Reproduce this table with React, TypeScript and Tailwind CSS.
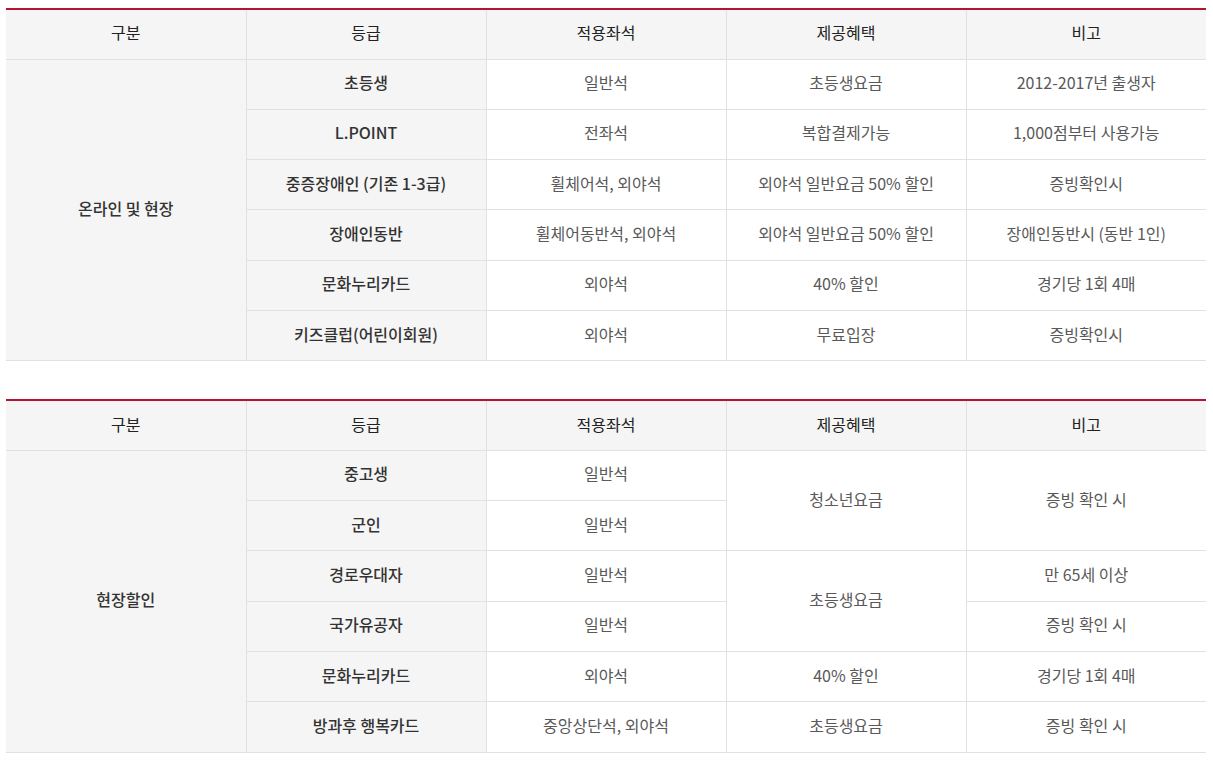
import React from "react";

const HEAD = ["구분", "등급", "적용좌석", "제공혜택", "비고"];

type Cell = { text: string; rows?: number };
type Row = { grade: string; cells: Cell[] };

const ONLINE: Row[] = [
  { grade: "초등생", cells: [{ text: "일반석" }, { text: "초등생요금" }, { text: "2012-2017년 출생자" }] },
  { grade: "L.POINT", cells: [{ text: "전좌석" }, { text: "복합결제가능" }, { text: "1,000점부터 사용가능" }] },
  { grade: "중증장애인 (기존 1-3급)", cells: [{ text: "휠체어석, 외야석" }, { text: "외야석 일반요금 50% 할인" }, { text: "증빙확인시" }] },
  { grade: "장애인동반", cells: [{ text: "휠체어동반석, 외야석" }, { text: "외야석 일반요금 50% 할인" }, { text: "장애인동반시 (동반 1인)" }] },
  { grade: "문화누리카드", cells: [{ text: "외야석" }, { text: "40% 할인" }, { text: "경기당 1회 4매" }] },
  { grade: "키즈클럽(어린이회원)", cells: [{ text: "외야석" }, { text: "무료입장" }, { text: "증빙확인시" }] },
];

const ONSITE: Row[] = [
  { grade: "중고생", cells: [{ text: "일반석" }, { text: "청소년요금", rows: 2 }, { text: "증빙 확인 시", rows: 2 }] },
  { grade: "군인", cells: [{ text: "일반석" }] },
  { grade: "경로우대자", cells: [{ text: "일반석" }, { text: "초등생요금", rows: 2 }, { text: "만 65세 이상" }] },
  { grade: "국가유공자", cells: [{ text: "일반석" }, { text: "증빙 확인 시" }] },
  { grade: "문화누리카드", cells: [{ text: "외야석" }, { text: "40% 할인" }, { text: "경기당 1회 4매" }] },
  { grade: "방과후 행복카드", cells: [{ text: "중앙상단석, 외야석" }, { text: "초등생요금" }, { text: "증빙 확인 시" }] },
];

function FareTable({ group, rows }: { group: string; rows: Row[] }) {
  return (
    <table className="w-[1200px] table-fixed border-collapse border-t-2 border-t-[#b3142f] text-[16px] text-center">
      <thead>
        <tr className="h-[50px] bg-[#f5f5f5]">
          {HEAD.map((h, i) => (
            <th
              key={h}
              className={
                "w-[240px] pb-1 font-normal text-[#222] border-b border-[#e1e1e1] " +
                (i > 0 ? "border-l" : "")
              }
            >
              {h}
            </th>
          ))}
        </tr>
      </thead>
      <tbody>
        {rows.map((r, i) => (
          <tr key={r.grade} className="h-[50.3px]">
            {i === 0 && (
              <td
                rowSpan={rows.length}
                className="pb-1 bg-[#f5f5f5] font-medium text-[#333] border-b border-[#e1e1e1]"
              >
                {group}
              </td>
            )}
            <td className="pb-1 bg-[#f5f5f5] font-medium text-[#333] border-b border-l border-[#e1e1e1]">
              {r.grade}
            </td>
            {r.cells.map((c, j) => (
              <td
                key={j}
                rowSpan={c.rows}
                className="pb-1 text-[#595959] border-b border-l border-[#e1e1e1]"
              >
                {c.text}
              </td>
            ))}
          </tr>
        ))}
      </tbody>
    </table>
  );
}

export default function App() {
  return (
    <div
      className="bg-white w-[1213px] min-h-[761px] pl-[6px] pt-[8px]"
      style={{ fontFamily: '"Noto Sans CJK KR", "Noto Sans", sans-serif' }}
    >
      <FareTable group="온라인 및 현장" rows={ONLINE} />
      <div className="h-[38px]" />
      <FareTable group="현장할인" rows={ONSITE} />
    </div>
  );
}
